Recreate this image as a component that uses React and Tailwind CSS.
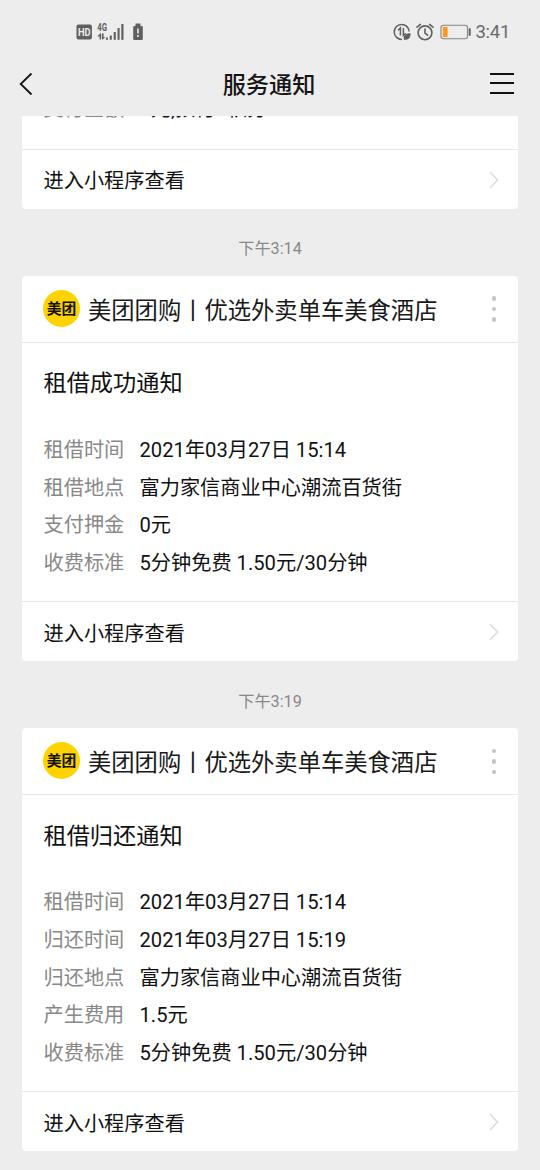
import clsx from "clsx";

const MESSAGES = [
  {
    time: "下午3:14",
    title: "租借成功通知",
    rows: [
      ["租借时间", "2021年03月27日 15:14"],
      ["租借地点", "富力家信商业中心潮流百货街"],
      ["支付押金", "0元"],
      ["收费标准", "5分钟免费 1.50元/30分钟"],
    ],
  },
  {
    time: "下午3:19",
    title: "租借归还通知",
    rows: [
      ["租借时间", "2021年03月27日 15:14"],
      ["归还时间", "2021年03月27日 15:19"],
      ["归还地点", "富力家信商业中心潮流百货街"],
      ["产生费用", "1.5元"],
      ["收费标准", "5分钟免费 1.50元/30分钟"],
    ],
  },
];

function StatusBar() {
  return (
    <div className="flex h-[62px] items-center justify-between pl-[76px] pr-[30px] pt-[1px] text-[#6a6a6a]">
      <div className="flex items-center">
        <svg width="17" height="16" viewBox="0 0 17 16">
          <rect x="0.5" y="0.5" width="15.4" height="15" rx="2" fill="#606060" />
          <text x="2" y="11.7" fontSize="10" fontWeight="700" textLength="12.6" lengthAdjust="spacingAndGlyphs" fontFamily="Roboto, sans-serif" fill="#ededed">HD</text>
        </svg>
        <svg className="ml-1" width="28" height="18" viewBox="0 0 28 18" fill="#606060">
          <text x="0.3" y="7.9" fontSize="10" fontWeight="700" textLength="9.8" lengthAdjust="spacingAndGlyphs" fontFamily="Roboto, sans-serif">4G</text>
          <path d="M0.3 13.6 3 10.5h1.2v6.1H2.6v-3zM5 10.5h1.6V14h1.6L5.8 16.6H5z" />
          <rect x="8.9" y="14.5" width="2" height="2.3" />
          <rect x="12.7" y="12.5" width="2.1" height="4.3" />
          <rect x="16.7" y="9" width="2.1" height="7.8" />
          <rect x="20.5" y="5" width="2.1" height="11.8" />
          <rect x="24.3" y="1" width="2.2" height="15.8" />
        </svg>
        <svg className="ml-[8px]" width="10" height="18" viewBox="0 0 10 18">
          <path d="M2.5 0.5h5V3h1a1.3 1.3 0 0 1 1.3 1.3v11.4A1.3 1.3 0 0 1 8.5 17h-7A1.3 1.3 0 0 1 0.2 15.7V4.3A1.3 1.3 0 0 1 1.5 3h1z" fill="#606060" />
          <path d="M5 5.5v5M5 12v2" stroke="#ededed" strokeWidth="1.6" />
        </svg>
      </div>
      <div className="flex items-center">
        <svg width="18" height="18" viewBox="0 0 18 18" fill="none" stroke="#606060" strokeWidth="1.5">
          <path d="M16.2 8.5A7.5 7.5 0 1 0 9 16.4" />
          <path d="M5 7.2 7.4 5v7.5M10.4 5v7.5l2.4-2.2" />
          <path d="M17.5 10.3c-5.2 0-7.2 2.2-6.6 6.4 4.6.7 7-1.8 6.6-6.4z" fill="#606060" stroke="none" />
        </svg>
        <svg className="ml-[5px]" width="18" height="18" viewBox="0 0 18 18" fill="none" stroke="#606060" strokeWidth="1.6" strokeLinecap="round">
          <circle cx="9" cy="9.8" r="6.9" />
          <path d="M9 6v4.2l2.6 2M1 4.2 4.4 1.4M17 4.2l-3.4-2.8" />
        </svg>
        <svg className="ml-[6px]" width="32" height="16" viewBox="0 0 32 16">
          <rect x="1" y="1.2" width="26.5" height="13.6" rx="2.5" fill="none" stroke="#858585" strokeWidth="1.1" />
          <rect x="2.8" y="3" width="4.8" height="10" fill="#fd9a1c" />
          <rect x="28.7" y="4.2" width="2" height="7.6" rx="0.6" fill="#606060" />
        </svg>
        <span className="ml-[4px] pt-[1px] text-[18.5px] leading-none tracking-[-0.3px]">3:41</span>
      </div>
    </div>
  );
}

function NavBar() {
  return (
    <div className="flex h-[54px] items-start justify-between pl-[19px] pr-[26px]">
      <svg className="mt-[10px]" width="29" height="24" viewBox="0 0 29 24" fill="none" stroke="#191919" strokeWidth="1.9">
        <path d="M12.5 1.5 1.7 12l10.8 10.5" />
      </svg>
      <h1 className="mt-[5.5px] text-[23.2px] font-medium leading-[34px] text-[#151515]">服务通知</h1>
      <div className="mt-[11px] flex w-[24px] flex-col gap-[7.3px]">
        <span className="h-[2px] bg-[#111]" />
        <span className="h-[2px] bg-[#111]" />
        <span className="h-[2px] bg-[#111]" />
      </div>
    </div>
  );
}

function Row({ label, value, className }) {
  return (
    <div className={clsx("flex h-[37.6px] items-center text-[20.2px]", className)}>
      <span className="w-[96px] shrink-0 text-[#888]">{label}</span>
      <span className="whitespace-pre text-[#111]">{value}</span>
    </div>
  );
}

function CardFooter() {
  return (
    <div className="flex h-[60px] items-center justify-between border-t border-[#e8e8e8] pl-[21.5px] pr-[19px] text-[20.2px] text-[#111]">
      <span className="pt-[4px]">进入小程序查看</span>
      <svg width="10" height="18" viewBox="0 0 10 18" fill="none" stroke="#dedede" strokeWidth="1.7">
        <path d="M1 1l7.5 8L1 17" />
      </svg>
    </div>
  );
}

function Card({ title, rows }) {
  return (
    <div className="rounded-[4px] bg-white">
      <div className="flex h-[67px] items-center border-b border-[#e8e8e8] pl-[21px] pr-[22px]">
        <div className="mb-[1px] flex size-[37px] shrink-0 items-center justify-center rounded-full bg-[#ffd300] text-[14.8px] font-bold leading-none text-[#111]">
          <span className="pt-[1px]">美团</span>
        </div>
        <span className="ml-[8px] whitespace-nowrap pt-[3px] text-[23.3px] leading-[34px] text-[#191919]">美团团购丨优选外卖单车美食酒店</span>
        <div className="ml-auto flex flex-col gap-[6px]">
          <span className="size-[4.4px] rounded-full bg-[#c4c4c4]" />
          <span className="size-[4.4px] rounded-full bg-[#c4c4c4]" />
          <span className="size-[4.4px] rounded-full bg-[#c4c4c4]" />
        </div>
      </div>
      <div className="px-[21.5px] pb-[19.6px] pt-[23.4px]">
        <h2 className="mb-[31px] text-[23.2px] leading-[34px] text-[#111]">{title}</h2>
        {rows.map(([label, value]) => (
          <Row key={label} label={label} value={value} />
        ))}
      </div>
      <CardFooter />
    </div>
  );
}

export default function App() {
  return (
    <div className="h-[1170px] w-[540px] overflow-hidden bg-[#ededed] font-[Roboto,'Noto_Sans_CJK_SC',sans-serif]">
      <StatusBar />
      <NavBar />
      <div className="px-[22px]">
        {/* Older message, scrolled under the nav bar */}
        <div className="overflow-hidden rounded-b-[4px] bg-white">
          <div className="flex h-[33px] flex-col px-[21.5px]">
            <Row label="支付金额" value="1元,预付1积分" className="-mt-[26px] shrink-0" />
          </div>
          <CardFooter />
        </div>
        {MESSAGES.map((msg) => (
          <div key={msg.time}>
            <p className="flex h-[67px] items-center justify-center pt-[14px] text-[16.2px] text-[#888]">{msg.time}</p>
            <Card title={msg.title} rows={msg.rows} />
          </div>
        ))}
      </div>
    </div>
  );
}
